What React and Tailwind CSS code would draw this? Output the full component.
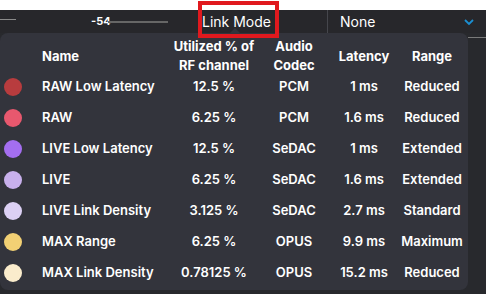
import React from 'react'

const modes = [
    { name: "RAW Low Latency", util: "12.5 %", codec: "PCM", latency: "1 ms", range: "Reduced", color: "bg-[#b83c3e]" },
    { name: "RAW", util: "6.25 %", codec: "PCM", latency: "1.6 ms", range: "Reduced", color: "bg-[#e8586e]" },
    { name: "LIVE Low Latency", util: "12.5 %", codec: "SeDAC", latency: "1 ms", range: "Extended", color: "bg-[#a46ef0]" },
    { name: "LIVE", util: "6.25 %", codec: "SeDAC", latency: "1.6 ms", range: "Extended", color: "bg-[#c8b0ec]" },
    { name: "LIVE Link Density", util: "3.125 %", codec: "SeDAC", latency: "2.7 ms", range: "Standard", color: "bg-[#dcd0f4]" },
    { name: "MAX Range", util: "6.25 %", codec: "OPUS", latency: "9.9 ms", range: "Maximum", color: "bg-[#f2d074]" },
    { name: "MAX Link Density", util: "0.78125 %", codec: "OPUS", latency: "15.2 ms", range: "Reduced", color: "bg-[#faeccc]" },
];

const cols = "grid grid-cols-[42px_130px_84px_76px_64px_72px]";

const App = () => {
    return (
        <div className="relative w-[486px] h-[294px] overflow-hidden bg-[#28292d] text-white font-['Inter',_'Noto_Sans',_sans-serif]">
            <div className="h-[10px] bg-white" />

            {/* top bar */}
            <div className="h-[23px] bg-[#27272b] flex items-center">
                <div className="w-[16px] h-px bg-[#8a8a8a] -mt-[4px]" />
                <div className="w-[75px]" />
                <span className="text-[11px] font-bold leading-none w-[17px]">-54</span>
                <div className="w-[60px] h-[2px] bg-[#666] mt-[1px]" />
                <div className="w-[34px]" />
                <span className="text-[14px] leading-none w-[125px]">Link Mode</span>
                <div className="w-px h-full bg-[#45464c]" />
                <span className="text-[14px] leading-none ml-[12px] w-[124px]">None</span>
                <svg width="10" height="7" viewBox="0 0 10 7" className="mt-[1px]">
                    <path d="M1 1l4 4 4-4" fill="none" stroke="#1b8fd2" strokeWidth="1.8" />
                </svg>
            </div>

            {/* tooltip panel */}
            <div className="relative w-[468px] h-[257px] bg-[#33343c] rounded-[8px] pt-[4px] text-[13px]">
                <div className="absolute -top-[5px] left-[230px] w-0 h-0 border-l-[5px] border-r-[5px] border-b-[5px] border-l-transparent border-r-transparent border-b-[#33343c]" />
                <div className={`${cols} h-[34px] items-center font-bold leading-[19px]`}>
                    <div />
                    <div>Name</div>
                    <div className="text-center">Utilized % of RF channel</div>
                    <div className="text-center">Audio Codec</div>
                    <div className="text-center">Latency</div>
                    <div className="text-center">Range</div>
                </div>
                {modes.map((m) => (
                    <div key={m.name} className={`${cols} h-[31px] items-center font-semibold`}>
                        <div className={`ml-[4px] w-[18px] h-[18px] rounded-full ${m.color}`} />
                        <div>{m.name}</div>
                        <div className="text-center">{m.util}</div>
                        <div className="text-center">{m.codec}</div>
                        <div className="text-center">{m.latency}</div>
                        <div className="text-center">{m.range}</div>
                    </div>
                ))}
            </div>

            <div className="absolute top-[37px] left-[468px] w-[18px] h-px bg-[#7a7a7a]" />
            <div className="absolute top-[1px] left-[198px] w-[81px] h-[37px] border-4 border-[#e0191e]" />
        </div>
    )
}

export default App
